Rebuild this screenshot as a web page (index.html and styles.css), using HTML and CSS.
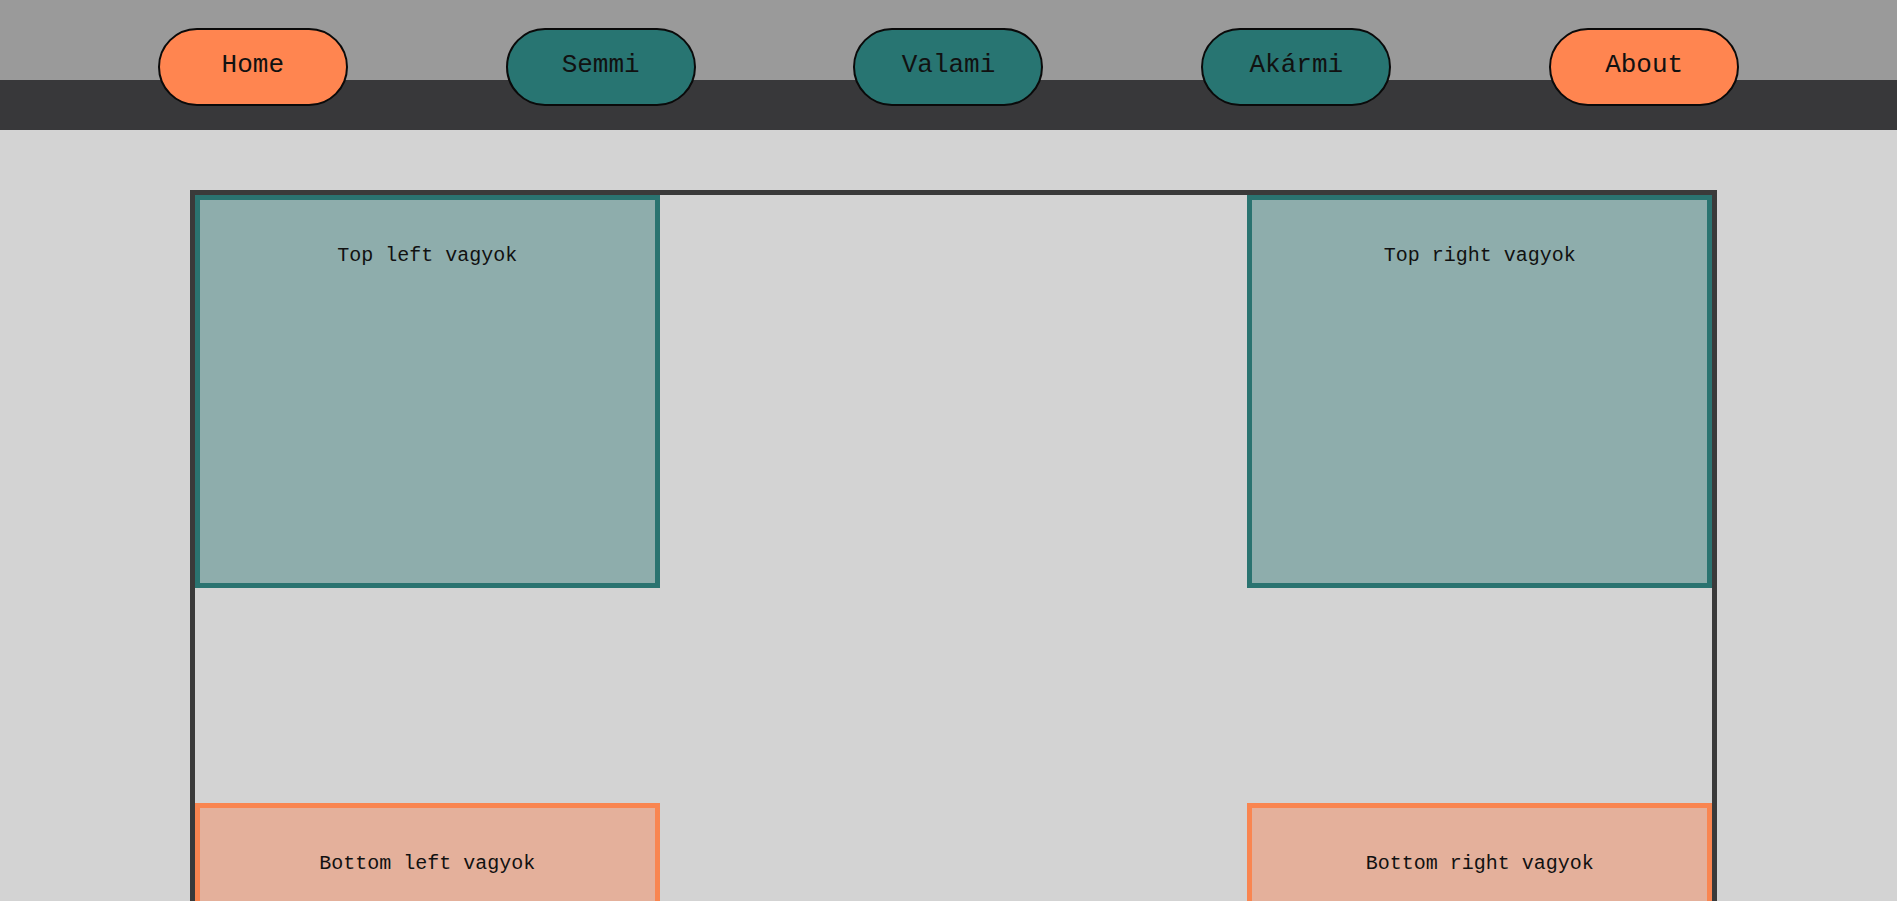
FILE: index.html
```html
<!DOCTYPE html>
<html lang="hu">
<head>
<meta charset="utf-8">
<title>Grid</title>
<link rel="stylesheet" href="styles.css">
</head>
<body>
<header class="header">
  <nav class="nav">
    <a class="btn btn-orange" href="#">Home</a>
    <a class="btn btn-teal" href="#">Semmi</a>
    <a class="btn btn-teal" href="#">Valami</a>
    <a class="btn btn-teal" href="#">Akármi</a>
    <a class="btn btn-orange" href="#">About</a>
  </nav>
</header>
<main class="container">
  <div class="box box-teal"><p>Top left vagyok</p></div>
  <div class="box box-teal"><p>Top right vagyok</p></div>
  <div class="box box-orange"><p>Bottom left vagyok</p></div>
  <div class="box box-orange"><p>Bottom right vagyok</p></div>
</main>
</body>
</html>
```

FILE: styles.css
```css
* { box-sizing: content-box; }
html, body { margin: 0; padding: 0; }
body {
  background: #d3d3d3;
  font-family: "Liberation Mono", "Courier New", monospace;
  color: #111;
}
.header {
  height: 130px;
  background: linear-gradient(to bottom, #9a9a9a 0, #9a9a9a 80px, #38383a 80px, #38383a 130px);
}
.nav {
  display: flex;
  justify-content: space-evenly;
  padding-top: 28px;
}
.btn {
  width: 186px;
  height: 70px;
  padding-bottom: 4px;
  border: 2px solid #0a0a0a;
  border-radius: 39px;
  display: flex;
  align-items: center;
  justify-content: center;
  font-size: 26px;
  color: #111;
  text-decoration: none;
}
.btn-orange { background: #ff8550; }
.btn-teal { background: #287572; }
.container {
  width: 80%;
  margin: 60px 0 0 10%;
  border: 5px solid #3a3a3a;
  height: 1001px;
  display: grid;
  grid-template-columns: calc(30% + 10px) calc(30% + 10px);
  grid-template-rows: 393px 393px;
  justify-content: space-between;
  align-content: space-between;
}
.box {
  border: 5px solid;
  text-align: center;
}
.box p {
  margin: 0;
  padding-top: 44px;
  font-size: 20px;
  line-height: 23px;
}
.box-teal { background: #8eadac; border-color: #2a7370; }
.box-orange { background: #e4b09b; border-color: #f98550; }
```
